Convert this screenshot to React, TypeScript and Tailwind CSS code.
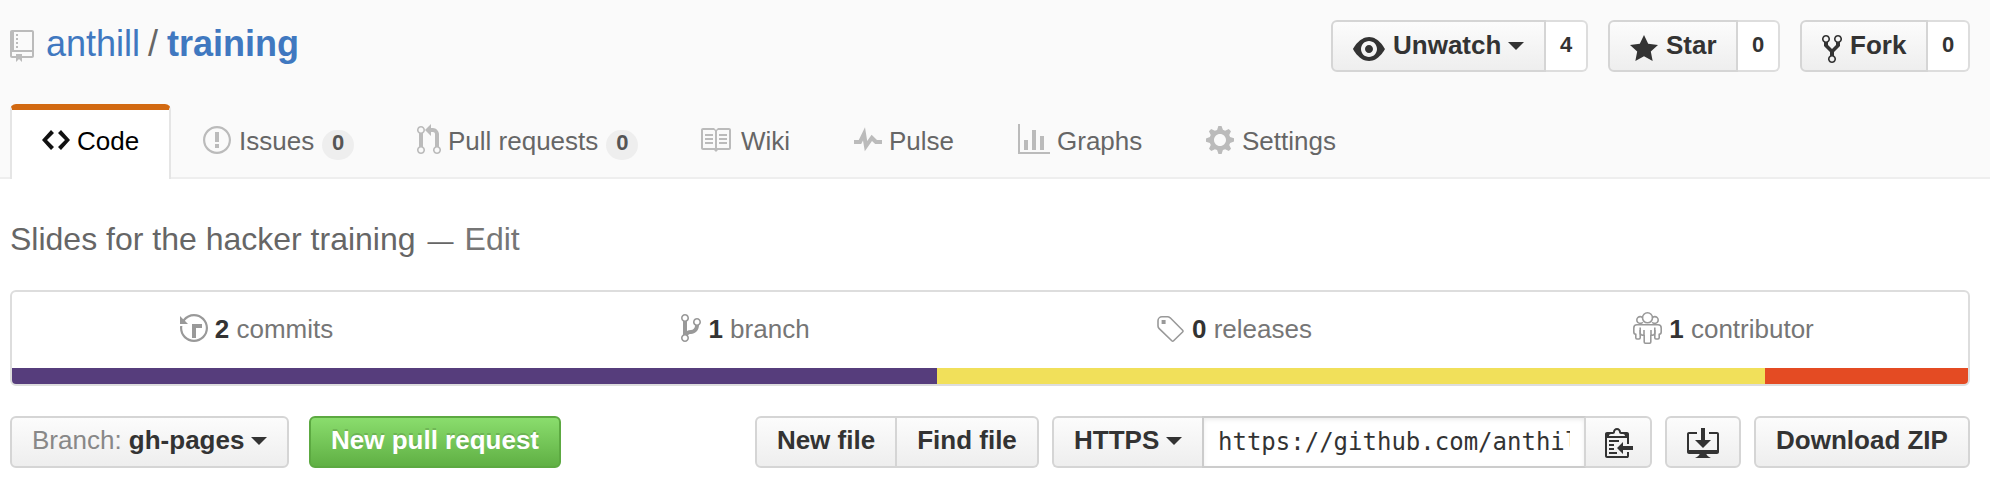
import React from "react";

const icons = {
  repo: [12, "M4 9H3V8h1v1zm0-3H3v1h1V6zm0-2H3v1h1V4zm0-2H3v1h1V2zm8-1v12c0 .55-.45 1-1 1H6v2l-1.5-1.5L3 16v-2H1c-.55 0-1-.45-1-1V1c0-.55.45-1 1-1h10c.55 0 1 .45 1 1zm-1 10H1v2h2v-1h3v1h5v-2zm0-10H2v9h9V1z"],
  code: [14, "M9.5 3L8 4.5 11.5 8 8 11.5 9.5 13 14 8 9.5 3zm-5 0L0 8l4.5 5L6 11.5 2.5 8 6 4.5 4.5 3z"],
  issue: [14, "M7 2.1a5.9 5.9 0 1 1 0 11.8A5.9 5.9 0 0 1 7 2.1zM7 1C3.14 1 0 4.14 0 8s3.14 7 7 7 7-3.14 7-7-3.14-7-7-7zm1 3H6v5h2V4zm0 6H6v2h2v-2z"],
  pull: [12, "M11 11.28V5c-.03-.78-.34-1.47-.94-2.06C9.46 2.35 8.78 2.03 8 2H7V0L4 3l3 3V4h1c.27.02.48.11.69.31.21.2.3.42.31.69v6.28A1.993 1.993 0 0 0 10 15a1.993 1.993 0 0 0 1-3.72zm-1 2.92c-.66 0-1.2-.55-1.2-1.2 0-.65.55-1.2 1.2-1.2.65 0 1.2.55 1.2 1.2 0 .65-.55 1.2-1.2 1.2zM4 3c0-1.11-.89-2-2-2a1.993 1.993 0 0 0-1 3.72v6.56A1.993 1.993 0 0 0 2 15a1.993 1.993 0 0 0 1-3.72V4.72c.59-.34 1-.98 1-1.72zm-.8 10c0 .66-.55 1.2-1.2 1.2-.65 0-1.2-.55-1.2-1.2 0-.65.55-1.2 1.2-1.2.65 0 1.2.55 1.2 1.2zM2 4.2C1.34 4.2.8 3.65.8 3c0-.65.55-1.2 1.2-1.2.65 0 1.2.55 1.2 1.2 0 .65-.55 1.2-1.2 1.2z"],
  book: [16, "M3 5h4v1H3V5zm0 3h4V7H3v1zm0 2h4V9H3v1zm11-5h-4v1h4V5zm0 2h-4v1h4V7zm0 2h-4v1h4V9zm2-6v9c0 .55-.45 1-1 1H9.5l-1 1-1-1H2c-.55 0-1-.45-1-1V3c0-.55.45-1 1-1h5.5l1 1 1-1H15c.55 0 1 .45 1 1zm-8 .5L7.5 3H2v9h6V3.5zm7-.5H9.5l-.5.5V12h6V3z"],
  pulse: [14, "M11.5 8L8.8 5.4 6.6 8.5 5.5 1.6 2.38 8H0v2h3.6l.9-1.8.9 5.4L9 8.5l1.6 1.5H14V8h-2.5z"],
  graph: [16, "M16 14v1H0V0h1v14h15zM5 13H3V8h2v5zm4 0H7V3h2v10zm4 0h-2V6h2v7z"],
  gear: [14, "M14 8.77v-1.6l-1.94-.64-.45-1.09.88-1.84-1.13-1.13-1.81.91-1.09-.45-.69-1.92h-1.6l-.63 1.94-1.11.45-1.84-.88-1.13 1.13.91 1.81-.45 1.09L0 7.23v1.59l1.94.64.45 1.09-.88 1.84 1.13 1.13 1.81-.91 1.09.45.69 1.92h1.59l.63-1.94 1.11-.45 1.84.88 1.13-1.13-.92-1.81.47-1.09L14 8.75v.02zM7 11c-1.66 0-3-1.34-3-3s1.34-3 3-3 3 1.34 3 3-1.34 3-3 3z"],
  eye: [16, "M8.06 2C3 2 0 8 0 8s3 6 8.06 6C13 14 16 8 16 8s-3-6-7.94-6zM8 12c-2.2 0-4-1.78-4-4 0-2.2 1.8-4 4-4 2.22 0 4 1.8 4 4 0 2.22-1.78 4-4 4zm2-4c0 1.11-.89 2-2 2-1.11 0-2-.89-2-2 0-1.11.89-2 2-2 1.11 0 2 .89 2 2z"],
  star: [14, "M14 6l-4.9-.64L7 1 4.9 5.36 0 6l3.6 3.26L2.67 14 7 11.67 11.33 14l-.93-4.74L14 6z"],
  fork: [10, "M8 1a1.993 1.993 0 0 0-1 3.72V6L5 8 3 6V4.72A1.993 1.993 0 0 0 2 1a1.993 1.993 0 0 0-1 3.72V6.5l3 3v1.78A1.993 1.993 0 0 0 5 15a1.993 1.993 0 0 0 1-3.72V9.5l3-3V4.72A1.993 1.993 0 0 0 8 1zM2 4.2C1.34 4.2.8 3.65.8 3c0-.65.55-1.2 1.2-1.2.65 0 1.2.55 1.2 1.2 0 .65-.55 1.2-1.2 1.2zm3 10c-.66 0-1.2-.55-1.2-1.2 0-.65.55-1.2 1.2-1.2.65 0 1.2.55 1.2 1.2 0 .65-.55 1.2-1.2 1.2zm3-10c-.66 0-1.2-.55-1.2-1.2 0-.65.55-1.2 1.2-1.2.65 0 1.2.55 1.2 1.2 0 .65-.55 1.2-1.2 1.2z"],
  history: [14, "M8 13H6V6h5v2H8v5zM7 1C4.81 1 2.87 2.02 1.59 3.59L0 2v4h4L2.4 4.4C3.5 3 5.1 2.1 7 2.1a5.9 5.9 0 1 1 0 11.8A5.9 5.9 0 0 1 1.1 8c0-.34.03-.67.09-1H.08C.03 7.33 0 7.66 0 8c0 3.86 3.14 7 7 7s7-3.14 7-7-3.14-7-7-7z"],
  branch: [10, "M10 5c0-1.11-.89-2-2-2a1.993 1.993 0 0 0-1 3.72v.3c-.02.52-.23.98-.63 1.38-.4.4-.86.61-1.38.63-.83.02-1.48.16-2 .45V4.72a1.993 1.993 0 0 0-1-3.72C.88 1 0 1.89 0 3a2 2 0 0 0 1 1.72v6.56c-.59.35-1 .99-1 1.72 0 1.11.89 2 2 2 1.11 0 2-.89 2-2 0-.53-.2-1-.53-1.36.09-.06.48-.41.59-.47.25-.11.56-.17.94-.17 1.05-.05 1.95-.45 2.75-1.25S8.95 7.77 9 6.73h-.02C9.59 6.37 10 5.73 10 5zM2 1.8c.66 0 1.2.55 1.2 1.2 0 .65-.55 1.2-1.2 1.2C1.35 4.2.8 3.65.8 3c0-.65.55-1.2 1.2-1.2zm0 12.41c-.66 0-1.2-.55-1.2-1.2 0-.65.55-1.2 1.2-1.2.65 0 1.2.55 1.2 1.2 0 .65-.55 1.2-1.2 1.2zm6-8c-.66 0-1.2-.55-1.2-1.2 0-.65.55-1.2 1.2-1.2.65 0 1.2.55 1.2 1.2 0 .65-.55 1.2-1.2 1.2z"],
  clippy: [14, "M2 13h4v1H2v-1zm5-6H2v1h5V7zm2 3V8l-3 3 3 3v-2h5v-2H9zM4.5 9H2v1h2.5V9zM2 12h2.5v-1H2v1zm9 1h1v2c-.02.28-.11.52-.3.7-.19.18-.42.28-.7.3H1c-.55 0-1-.45-1-1V4c0-.55.45-1 1-1h3c0-1.11.89-2 2-2 1.11 0 2 .89 2 2h3c.55 0 1 .45 1 1v5h-1V6H1v9h10v-2zM2 5h8c0-.55-.45-1-1-1H8c-.55 0-1-.45-1-1s-.45-1-1-1-1 .45-1 1-.45 1-1 1H3c-.55 0-1 .45-1 1z"],
  desktop: [16, "M4 6h3V0h2v6h3l-4 4-4-4zm11-4h-4v1h4v8H1V3h4V2H1c-.55 0-1 .45-1 1v9c0 .55.45 1 1 1h5.34c-.25.61-.86 1.39-2.34 2h8c-1.48-.61-2.09-1.39-2.34-2H15c.55 0 1-.45 1-1V3c0-.55-.45-1-1-1z"],
} as const;

function Icon({ name, className = "" }: { name: keyof typeof icons; className?: string }) {
  const [w, d] = icons[name];
  return (
    <svg width={w * 2} height={32} viewBox={`0 0 ${w} 16`} fill="currentColor" fillRule="evenodd" className={`shrink-0 ${className}`}>
      <path d={d} />
    </svg>
  );
}

function TagIcon() {
  return (
    <svg width={28} height={32} viewBox="0 0 14 16" fill="none" stroke="currentColor" strokeWidth=".8" className="shrink-0 text-[#999]">
      <path d="M2.5 2.4h2.8c.5 0 .9.2 1.3.5l6.2 6.2c.3.3.3.6 0 .9l-4.5 4.4c-.3.3-.6.3-.9 0L1.1 8.3C.7 7.9.5 7.5.5 7V4.4c0-1.1.9-2 2-2z" />
      <path d="M2.3 4h2v2h-2z" fill="currentColor" stroke="none" />
    </svg>
  );
}

function PeopleIcon() {
  return (
    <svg width={29} height={32} viewBox="0 0 14.5 16" fill="none" stroke="currentColor" strokeWidth=".8" className="shrink-0 text-[#999]">
      <circle cx="7.25" cy="2.9" r="2.5" />
      <path d="M4.9 5.1A1.7 1.7 0 1 1 4.9 2.9M9.6 5.1A1.7 1.7 0 1 0 9.6 2.9" />
      <path d="M4 6.4h6.5M4 6.4H2C1 6.4.4 7 .4 8v2c0 .8.4 1.1 1 1.2v1.7c0 .4.2.6.6.6h1c.4 0 .6-.2.6-.6V9M10.5 6.4h2c1 0 1.6.6 1.6 1.6v2c0 .8-.4 1.1-1 1.2v1.7c0 .4-.2.6-.6.6h-1c-.4 0-.6-.2-.6-.6V9" />
      <path d="M3.6 7.8v2.8c0 .7.6 1 1.9 1V9M10.9 7.8v2.8c0 .7-.6 1-1.9 1V9M5.6 11.5V15c0 .4.2.6.6.6h2.1c.4 0 .6-.2.6-.6v-3.5" />
    </svg>
  );
}

function Caret({ className = "" }: { className?: string }) {
  return (
    <svg width={16} height={8} viewBox="0 0 16 8" fill="currentColor" className={`shrink-0 ${className}`}>
      <path d="M0 0h16L8 8z" />
    </svg>
  );
}

const btn =
  "flex h-[52px] shrink-0 items-center border-2 border-[#d5d5d5] bg-linear-to-b from-[#fcfcfc] to-[#eee] text-[26px] font-bold leading-8 text-[#333] whitespace-nowrap";

function SocialButton({ icon, label, count, caret, className }: { icon: "eye" | "star" | "fork"; label: string; count: string; caret?: boolean; className: string }) {
  return (
    <div className="flex">
      <button className={`${btn} rounded-l-md pl-5 ${className}`}>
        <Icon name={icon} className="mt-1.5" />
        <span className="ml-2 pb-[3px]">{label}</span>
        {caret && <Caret className="ml-[7px]" />}
      </button>
      <span className="flex h-[52px] w-[42px] items-center justify-center rounded-r-md border-2 border-l-0 border-[#ddd] bg-white pb-[3px] text-[22px] font-bold leading-8 text-[#333]">
        {count}
      </span>
    </div>
  );
}

function Tab({ icon, label, count, className, gap = "ml-[7px]" }: { icon: keyof typeof icons; label: string; count?: string; className: string; gap?: string }) {
  return (
    <a className={`flex h-[72px] shrink-0 items-center whitespace-nowrap text-[26px] leading-8 text-[#666] ${className}`}>
      <Icon name={icon} className="text-[#bbb]" />
      <span className={`${gap} pt-0.5`}>{label}</span>
      {count && (
        <span className="ml-2 mt-2.5 flex h-[30px] w-8 items-center justify-center rounded-[15px] bg-[#eee] pb-[5px] text-[22px] font-bold leading-6 text-[#555]">
          {count}
        </span>
      )}
    </a>
  );
}

function Stat({ icon, count, label }: { icon: React.ReactNode; count: string; label: string }) {
  return (
    <div className="flex flex-1 items-center justify-center pb-1 text-[26px] leading-8 text-[#767676]">
      {icon}
      <span className="ml-[7px] whitespace-pre pt-0.5">
        <strong className="font-bold text-[#333]">{count}</strong> {label}
      </span>
    </div>
  );
}

export default function App() {
  return (
    <div className="h-[484px] w-[1990px] overflow-hidden bg-white font-['Liberation_Sans',Arial,sans-serif]">
      <header className="flex h-[179px] flex-col bg-[#fafafa]">
        <div className="flex h-[104px] justify-between pl-2.5 pr-5">
          <h1 className="flex h-[92px] items-center text-[36px] leading-10 text-[#666]">
            <Icon name="repo" className="text-[#bbb]" />
            <span className="ml-3 whitespace-pre pb-[5px]">
              <a className="text-[#4078c0]">anthill</a>
              <span className="ml-2 mr-[9px]">/</span>
              <a className="font-bold text-[#4078c0]">training</a>
            </span>
          </h1>
          <div className="flex gap-5 pt-5">
            <SocialButton icon="eye" label="Unwatch" count="4" caret className="w-[215px]" />
            <SocialButton icon="star" label="Star" count="0" className="w-[130px]" />
            <SocialButton icon="fork" label="Fork" count="0" className="w-32" />
          </div>
        </div>
        <nav className="flex h-[75px]">
          <div className="w-2.5 border-b-2 border-[#eee]" />
          <a className="flex w-[161px] items-center rounded-t-md border-x-2 border-t-[6px] border-x-[#e5e5e5] border-t-[#d26911] bg-white pb-[9px] pl-[30px] text-[26px] leading-8 text-black">
            <Icon name="code" className="text-[#111]" />
            <span className="ml-[7px] pt-0.5">Code</span>
          </a>
          <div className="flex flex-1 border-b-2 border-[#eee] pl-8">
            <Tab icon="issue" label="Issues" count="0" className="w-[214px]" gap="ml-2" />
            <Tab icon="pull" label="Pull requests" count="0" className="w-[282px]" />
            <Tab icon="book" label="Wiki" className="w-[155px]" gap="ml-2.5" />
            <Tab icon="pulse" label="Pulse" className="w-[164px]" />
            <Tab icon="graph" label="Graphs" className="w-[188px]" />
            <Tab icon="gear" label="Settings" className="" gap="ml-2" />
          </div>
        </nav>
      </header>

      <main className="pl-2.5 pr-5">
        <p className="flex h-[111px] items-center whitespace-nowrap pt-[9px] text-[32px] leading-10 text-[#666]">
          <span>Slides for the hacker training</span>
          <span className="ml-3 pt-1 text-[26px]">—</span>
          <a className="ml-[11px] text-[#767676]">Edit</a>
        </p>

        <section className="h-24 overflow-hidden rounded-md border-2 border-[#ddd]">
          <div className="flex h-[76px]">
            <Stat icon={<Icon name="history" className="text-[#999]" />} count="2" label="commits" />
            <Stat icon={<Icon name="branch" className="text-[#999]" />} count="1" label="branch" />
            <Stat icon={<TagIcon />} count="0" label="releases" />
            <Stat icon={<PeopleIcon />} count="1" label="contributor" />
          </div>
          <div className="flex h-4">
            <span className="w-[925px] bg-[#563d7c]" />
            <span className="w-[828px] bg-[#f1e05a]" />
            <span className="flex-1 bg-[#e44b23]" />
          </div>
        </section>

        <div className="mt-[30px] flex">
          <button className={`${btn} w-[279px] rounded-md pl-5`}>
            <span className="whitespace-pre pb-[5px]">
              <span className="font-normal text-[#888]">Branch: </span>gh-pages
            </span>
            <Caret className="mb-0.5 ml-[7px]" />
          </button>
          <button className="ml-5 flex h-[52px] w-[252px] items-center justify-center rounded-md border-2 border-[#5ca941] bg-linear-to-b from-[#8add6d] to-[#60b044] pb-[5px] text-[26px] font-bold leading-8 text-white [text-shadow:0_-2px_0_rgba(0,0,0,0.15)]">
            New pull request
          </button>
          <div className="ml-auto flex">
            <button className={`${btn} w-[142px] justify-center rounded-l-md pb-[5px]`}>New file</button>
            <button className={`${btn} w-[142px] justify-center rounded-r-md border-l-0 pb-[5px]`}>Find file</button>
          </div>
          <div className="ml-[13px] flex">
            <button className={`${btn} w-[150px] rounded-l-md border-r-0 pl-5`}>
              <span className="pb-[5px]">HTTPS</span>
              <Caret className="mb-0.5 ml-[7px]" />
            </button>
            <div className="flex h-[52px] w-[384px] items-center border-2 border-[#ccc] border-r-[#d5d5d5] px-3.5 pb-px font-['DejaVu_Sans_Mono',monospace] text-[24px] leading-8 text-[#333] shadow-[inset_0_2px_4px_rgba(0,0,0,0.075)]">
              <span className="w-full overflow-hidden whitespace-nowrap">https://github.com/anthill/training.git</span>
            </div>
            <button className={`${btn} w-[66px] rounded-r-md border-l-0 pl-[19px]`}>
              <Icon name="clippy" />
            </button>
          </div>
          <button className={`${btn} ml-[13px] w-[76px] justify-center rounded-md`}>
            <Icon name="desktop" className="mt-1" />
          </button>
          <button className={`${btn} ml-[13px] w-[216px] justify-center rounded-md pb-[5px]`}>Download ZIP</button>
        </div>
      </main>
    </div>
  );
}
